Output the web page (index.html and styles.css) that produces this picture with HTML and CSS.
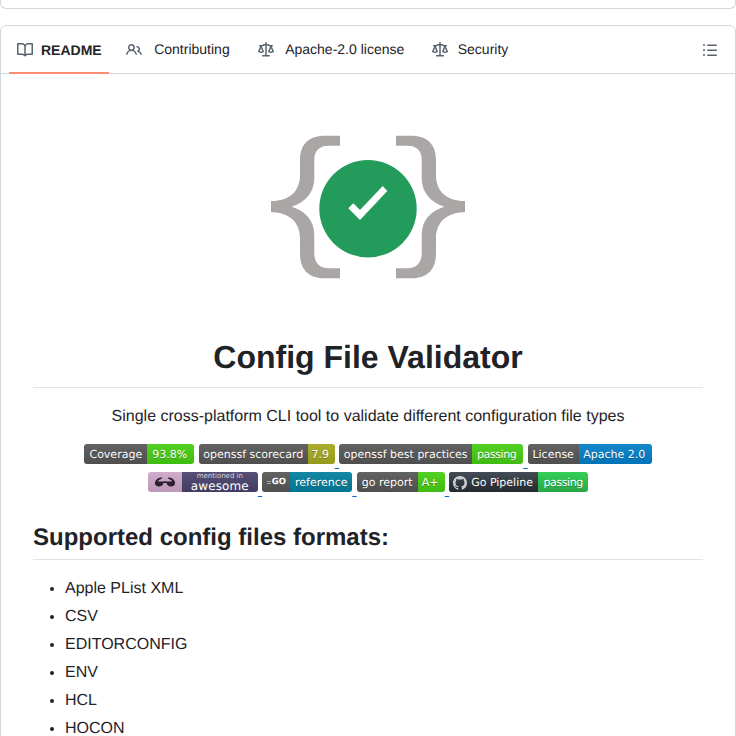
FILE: index.html
```html
<!DOCTYPE html>
<html lang="en">
<head>
    <meta charset="UTF-8">
    <title>Config File Validator</title>
    <link rel="stylesheet" href="styles.css">
</head>
<body>

<div class="top-box"></div>

<div class="readme-box">
    <nav class="tabs">
        <a class="tab active">
            <svg class="tab-icon" viewBox="0 0 16 16"><path d="M0 1.75A.75.75 0 0 1 .75 1h4.253c1.227 0 2.317.59 3 1.501A3.743 3.743 0 0 1 11.006 1h4.245a.75.75 0 0 1 .75.75v10.5a.75.75 0 0 1-.75.75h-4.507a2.25 2.25 0 0 0-1.591.659l-.622.621a.75.75 0 0 1-1.06 0l-.622-.621A2.25 2.25 0 0 0 5.258 13H.75a.75.75 0 0 1-.75-.75Zm7.251 10.324.004-5.073-.002-2.253A2.25 2.25 0 0 0 5.003 2.5H1.5v9h3.757a3.75 3.75 0 0 1 1.994.574ZM8.755 4.75l-.004 7.322a3.752 3.752 0 0 1 1.992-.572H14.5v-9h-3.495a2.25 2.25 0 0 0-2.25 2.25Z"/></svg>
            README
        </a>
        <a class="tab tab-contributing">
            <svg class="tab-icon" viewBox="0 0 16 16"><path d="M2 5.5a3.5 3.5 0 1 1 5.898 2.549 5.508 5.508 0 0 1 3.034 4.084.75.75 0 1 1-1.482.235 4 4 0 0 0-7.9 0 .75.75 0 0 1-1.482-.236A5.507 5.507 0 0 1 3.102 8.05 3.493 3.493 0 0 1 2 5.5ZM11 4a3.001 3.001 0 0 1 2.22 5.018 5.01 5.01 0 0 1 2.56 3.012.749.749 0 0 1-.885.954.752.752 0 0 1-.549-.514 3.507 3.507 0 0 0-2.522-2.372.75.75 0 0 1-.574-.73v-.352a.75.75 0 0 1 .416-.672A1.5 1.5 0 0 0 11 5.5.75.75 0 0 1 11 4Zm-5.5-.5a2 2 0 1 0-.001 3.999A2 2 0 0 0 5.5 3.5Z"/></svg>
            Contributing
        </a>
        <a class="tab tab-license">
            <svg class="tab-icon" viewBox="0 0 16 16"><path d="M8.75.75V2h.985c.304 0 .603.08.867.231l1.29.736c.038.022.08.033.124.033h2.234a.75.75 0 0 1 0 1.5h-.427l2.111 4.692a.75.75 0 0 1-.154.838l-.53-.53.529.531-.001.002-.002.002-.006.006-.006.005-.01.01-.045.04c-.21.176-.441.327-.686.45C14.556 10.78 13.88 11 13 11a4.498 4.498 0 0 1-2.023-.454 3.544 3.544 0 0 1-.686-.45l-.045-.04-.016-.015-.006-.006-.004-.004v-.001a.75.75 0 0 1-.154-.838L12.178 4.5h-.162c-.305 0-.604-.079-.868-.231l-1.29-.736a.245.245 0 0 0-.124-.033H8.75V13h2.5a.75.75 0 0 1 0 1.5h-6.5a.75.75 0 0 1 0-1.5h2.5V3.5h-.984a.245.245 0 0 0-.124.033l-1.289.737c-.265.15-.564.23-.869.23h-.162l2.112 4.692a.75.75 0 0 1-.154.838l-.53-.53.529.531-.001.002-.002.002-.006.006-.016.015-.045.04c-.21.176-.441.327-.686.45C4.556 10.78 3.88 11 3 11a4.498 4.498 0 0 1-2.023-.454 3.544 3.544 0 0 1-.686-.45l-.045-.04-.016-.015-.006-.006-.004-.004v-.001a.75.75 0 0 1-.154-.838L2.178 4.5H1.75a.75.75 0 0 1 0-1.5h2.234a.249.249 0 0 0 .125-.033l1.288-.737c.265-.15.564-.23.869-.23h.984V.75a.75.75 0 0 1 1.5 0Zm2.945 8.477c.285.135.718.273 1.305.273s1.02-.138 1.305-.273L13 6.327Zm-10 0c.285.135.718.273 1.305.273s1.02-.138 1.305-.273L3 6.327Z"/></svg>
            Apache-2.0 license
        </a>
        <a class="tab tab-security">
            <svg class="tab-icon" viewBox="0 0 16 16"><path d="M8.75.75V2h.985c.304 0 .603.08.867.231l1.29.736c.038.022.08.033.124.033h2.234a.75.75 0 0 1 0 1.5h-.427l2.111 4.692a.75.75 0 0 1-.154.838l-.53-.53.529.531-.001.002-.002.002-.006.006-.006.005-.01.01-.045.04c-.21.176-.441.327-.686.45C14.556 10.78 13.88 11 13 11a4.498 4.498 0 0 1-2.023-.454 3.544 3.544 0 0 1-.686-.45l-.045-.04-.016-.015-.006-.006-.004-.004v-.001a.75.75 0 0 1-.154-.838L12.178 4.5h-.162c-.305 0-.604-.079-.868-.231l-1.29-.736a.245.245 0 0 0-.124-.033H8.75V13h2.5a.75.75 0 0 1 0 1.5h-6.5a.75.75 0 0 1 0-1.5h2.5V3.5h-.984a.245.245 0 0 0-.124.033l-1.289.737c-.265.15-.564.23-.869.23h-.162l2.112 4.692a.75.75 0 0 1-.154.838l-.53-.53.529.531-.001.002-.002.002-.006.006-.016.015-.045.04c-.21.176-.441.327-.686.45C4.556 10.78 3.88 11 3 11a4.498 4.498 0 0 1-2.023-.454 3.544 3.544 0 0 1-.686-.45l-.045-.04-.016-.015-.006-.006-.004-.004v-.001a.75.75 0 0 1-.154-.838L2.178 4.5H1.75a.75.75 0 0 1 0-1.5h2.234a.249.249 0 0 0 .125-.033l1.288-.737c.265-.15.564-.23.869-.23h.984V.75a.75.75 0 0 1 1.5 0Zm2.945 8.477c.285.135.718.273 1.305.273s1.02-.138 1.305-.273L13 6.327Zm-10 0c.285.135.718.273 1.305.273s1.02-.138 1.305-.273L3 6.327Z"/></svg>
            Security
        </a>
        <svg class="outline-icon" viewBox="0 0 16 16"><path d="M5.75 2.5h8.5a.75.75 0 0 1 0 1.5h-8.5a.75.75 0 0 1 0-1.5Zm0 5h8.5a.75.75 0 0 1 0 1.5h-8.5a.75.75 0 0 1 0-1.5Zm0 5h8.5a.75.75 0 0 1 0 1.5h-8.5a.75.75 0 0 1 0-1.5ZM2 14a1 1 0 1 1 0-2 1 1 0 0 1 0 2Zm1-6a1 1 0 1 1-2 0 1 1 0 0 1 2 0ZM2 4a1 1 0 1 1 0-2 1 1 0 0 1 0 2Z"/></svg>
    </nav>

    <article class="markdown">
        <div class="logo-wrap">
            <svg class="logo" viewBox="0 0 196 144">
                <path id="brace" fill="#aaa6a5" d="M70 .7H55C38 .7 30 10 30 25V40C30 56 20 66 1 66V77.300C20 77.300 30 88 30 103.300V118.300C30 134 38 143.300 55 143.300H70V133.300H58.300C50 133.300 44.300 128 44.300 118.300V100C44.300 86 36 76 21.700 71.700C36 67 44.300 57 44.300 43.300V25C44.300 15 50 10.700 58.300 10.700H70Z"/>
                <use href="#brace" transform="translate(196 0) scale(-1 1)"/>
                <circle cx="98" cy="73.700" r="48.700" fill="#239b5b"/>
                <polygon fill="#ffffff" points="78.300,73.300 90,85 117.300,56 112.700,51 90,75 83.300,68.300"/>
            </svg>
        </div>
        <h1>Config File Validator</h1>
        <p class="tagline">Single cross-platform CLI tool to validate different configuration file types</p>

        <p class="badges">
            <a><span class="badge badge-coverage"><span class="b-left">Coverage</span><span class="b-right green">93.8%</span></span></a>
            <a><span class="badge badge-scorecard"><span class="b-left">openssf scorecard</span><span class="b-right olive">7.9</span></span> </a><a><span class="badge badge-practices"><span class="b-left">openssf best practices</span><span class="b-right green passing">passing</span></span> </a><a><span class="badge badge-license"><span class="b-left">License</span><span class="b-right blue">Apache 2.0</span></span></a>
            <br>
            <a><span class="badge badge-awesome"><span class="b-left pink"><svg class="shades" viewBox="0 0 20 10"><path d="M0 5C1 2 4 0 7 .5L6.500 2C5 2 3.500 3 3 4.500H8.500C9.200 4 10.800 4 11.500 4.500H17C16.500 3 15 2 13.500 2L13 .5C16 0 19 2 20 5V6.500C20 8.500 18 9.500 16 9.500C13.500 9.500 12 8 11.500 6H8.500C8 8 6.500 9.500 4 9.500C2 9.500 0 8.500 0 6.500Z"/></svg></span><span class="b-right awesome"><small>mentioned in</small><b>awesome</b></span></span> </a><a><span class="badge badge-go"><span class="b-left go">GO</span><span class="b-right teal">reference</span></span> </a><a><span class="badge badge-report"><span class="b-left">go report</span><span class="b-right green">A+</span></span> </a><a><span class="badge badge-pipeline"><span class="b-left dark"><svg class="gh-mark" viewBox="0 0 16 16"><path d="M8 0C3.58 0 0 3.58 0 8c0 3.54 2.29 6.53 5.47 7.59.4.07.55-.17.55-.38 0-.19-.01-.82-.01-1.49-2.01.37-2.53-.49-2.69-.94-.09-.23-.48-.94-.82-1.13-.28-.15-.68-.52-.01-.53.63-.01 1.08.58 1.23.82.72 1.21 1.87.87 2.33.66.07-.52.28-.87.51-1.07-1.78-.2-3.64-.89-3.64-3.95 0-.87.31-1.59.82-2.15-.08-.2-.36-1.02.08-2.12 0 0 .67-.21 2.2.82.64-.18 1.32-.27 2-.27s1.36.09 2 .27c1.53-1.04 2.2-.82 2.2-.82.44 1.1.16 1.92.08 2.12.51.56.82 1.27.82 2.15 0 3.07-1.87 3.75-3.65 3.95.29.25.54.73.54 1.48 0 1.07-.01 1.93-.01 2.2 0 .21.15.46.55.38A8.01 8.01 0 0 0 16 8c0-4.42-3.58-8-8-8Z"/></svg>Go Pipeline</span><span class="b-right bright passing">passing</span></span></a>
        </p>

        <h2>Supported config files formats:</h2>
        <ul>
            <li>Apple PList XML</li>
            <li>CSV</li>
            <li>EDITORCONFIG</li>
            <li>ENV</li>
            <li>HCL</li>
            <li>HOCON</li>
        </ul>
    </article>
</div>

</body>
</html>
```

FILE: styles.css
```css
html, body {
    height: 736px;
    overflow: hidden;
}

body {
    margin: 0;
    background-color: #ffffff;
    color: #1f2328;
    font-family: "Liberation Sans", Arial, sans-serif;
    font-size: 16px;
    line-height: 1.5;
    text-rendering: geometricPrecision;
}

.top-box {
    height: 8px;
    border: 1px solid #d1d9e0;
    border-top: none;
    border-radius: 0 0 6px 6px;
}

.readme-box {
    margin-top: 16px;
    border: 1px solid #d1d9e0;
    border-radius: 6px;
}

/* Tabs */
.tabs {
    display: flex;
    align-items: center;
    height: 47px;
    padding: 0 8px;
    border-bottom: 1px solid #d1d9e0;
}

.tab {
    display: flex;
    align-items: center;
    gap: 8px;
    height: 100%;
    padding: 0 8px;
    font-size: 14px;
    color: #1f2328;
    box-sizing: border-box;
}

.tab.active {
    font-weight: 700;
    border-bottom: 2px solid #fd8c73;
    padding: 2px 7.5px 0 8px;
    height: 48px;
    margin-bottom: -1px;
    margin-right: 9px;
}

.tab-contributing {
    gap: 12px;
    margin-right: 12.5px;
}

.tab-license {
    gap: 11px;
    margin-right: 11.5px;
}

.tab-security {
    gap: 10px;
}

.tab-icon {
    width: 16px;
    height: 16px;
    fill: #59636e;
}

.outline-icon {
    width: 16px;
    height: 16px;
    fill: #59636e;
    margin-left: auto;
    margin-right: 9px;
}

/* Readme body */
.markdown {
    padding: 32px;
}

.logo-wrap {
    display: flex;
    justify-content: center;
    margin-top: 29px;
}

.logo {
    width: 196px;
    height: 144px;
}

h1 {
    margin: 58px 0 17px;
    padding-bottom: 10px;
    font-size: 32px;
    line-height: 1.25;
    font-weight: 600;
    text-align: center;
    border-bottom: 1px solid rgba(209, 217, 224, 0.7);
}

.tagline {
    margin: 0 0 15px;
    text-align: center;
}

/* Badges */
.badges {
    margin: 0;
    text-align: center;
    line-height: 24px;
}

.badges a {
    color: #0969da;
    text-decoration: underline;
    text-underline-offset: 4px;
}

.badge {
    display: inline-block;
    height: 20px;
    border-radius: 3px;
    overflow: hidden;
    font-family: "DejaVu Sans", Verdana, sans-serif;
    font-size: 11px;
    line-height: 20px;
    color: #ffffff;
    text-shadow: 0 1px 0 rgba(1, 1, 1, 0.3);
}

.b-left,
.b-right {
    float: left;
    display: flex;
    align-items: center;
    justify-content: center;
    height: 20px;
    padding-top: 1px;
    box-sizing: border-box;
    background-image: linear-gradient(rgba(255, 255, 255, 0.08), rgba(0, 0, 0, 0.08));
}

.b-left {
    background-color: #555555;
}

.b-right.green {
    background-color: #44cc11;
    padding-right: 2px;
}

.b-right.olive {
    background-color: #a4a61d;
    padding-right: 2px;
}

.b-right.blue {
    background-color: #007ec6;
    padding-right: 2px;
}

.b-right.teal {
    background-color: #007d9c;
}

.b-right.passing {
    letter-spacing: -0.4px;
}

.badge-coverage .b-left { width: 63px; }
.badge-coverage .b-right { width: 47px; }
.badge-scorecard .b-left { width: 109px; }
.badge-scorecard .b-right { width: 27px; }
.badge-practices .b-left { width: 133px; }
.badge-practices .b-right { width: 51px; }
.badge-license .b-left { width: 51px; }
.badge-license .b-right { width: 73px; }
.badge-awesome .b-left { width: 34px; }
.badge-awesome .b-right { width: 76px; }
.badge-go .b-left { width: 28px; }
.badge-go .b-right { width: 62px; }
.badge-report .b-left { width: 61px; }
.badge-report .b-right { width: 27px; }
.badge-pipeline .b-left { width: 89px; }
.badge-pipeline .b-right { width: 50px; }

.b-left.pink {
    padding-top: 0;
    background-color: #cda4c6;
}

.shades {
    width: 20px;
    height: 10px;
    fill: #2c1f2f;
}

.b-right.awesome {
    flex-direction: column;
    padding-top: 0;
    background-color: #47416a;
    line-height: 1;
    text-shadow: none;
}

.awesome small {
    font-size: 7px;
    color: #d8d4e4;
}

.awesome b {
    font-weight: 400;
    font-size: 12px;
    letter-spacing: 0.1px;
}

.b-left.go {
    gap: 1px;
    padding-top: 0;
    font-weight: 700;
    font-size: 8.5px;
    text-shadow: none;
}

.b-left.go::before {
    content: "";
    width: 4px;
    height: 1px;
    border-top: 1px solid #a8a8a8;
    border-bottom: 1px solid #a8a8a8;
}

.b-left.dark {
    justify-content: flex-start;
    gap: 4px;
    padding-left: 4px;
    background-color: #24292e;
    background-image: linear-gradient(#444d56, #24292e);
}

.b-right.bright {
    background-image: linear-gradient(#34d058, #28a745);
}

.gh-mark {
    width: 14px;
    height: 14px;
    fill: #c9ccd0;
}

h2 {
    margin: 23px 0 17px;
    padding-bottom: 6px;
    font-size: 24px;
    line-height: 1.25;
    font-weight: 600;
    border-bottom: 1px solid rgba(209, 217, 224, 0.7);
}

ul {
    margin: 0;
    padding-left: 32px;
}

li {
    margin-top: 4px;
}
```
